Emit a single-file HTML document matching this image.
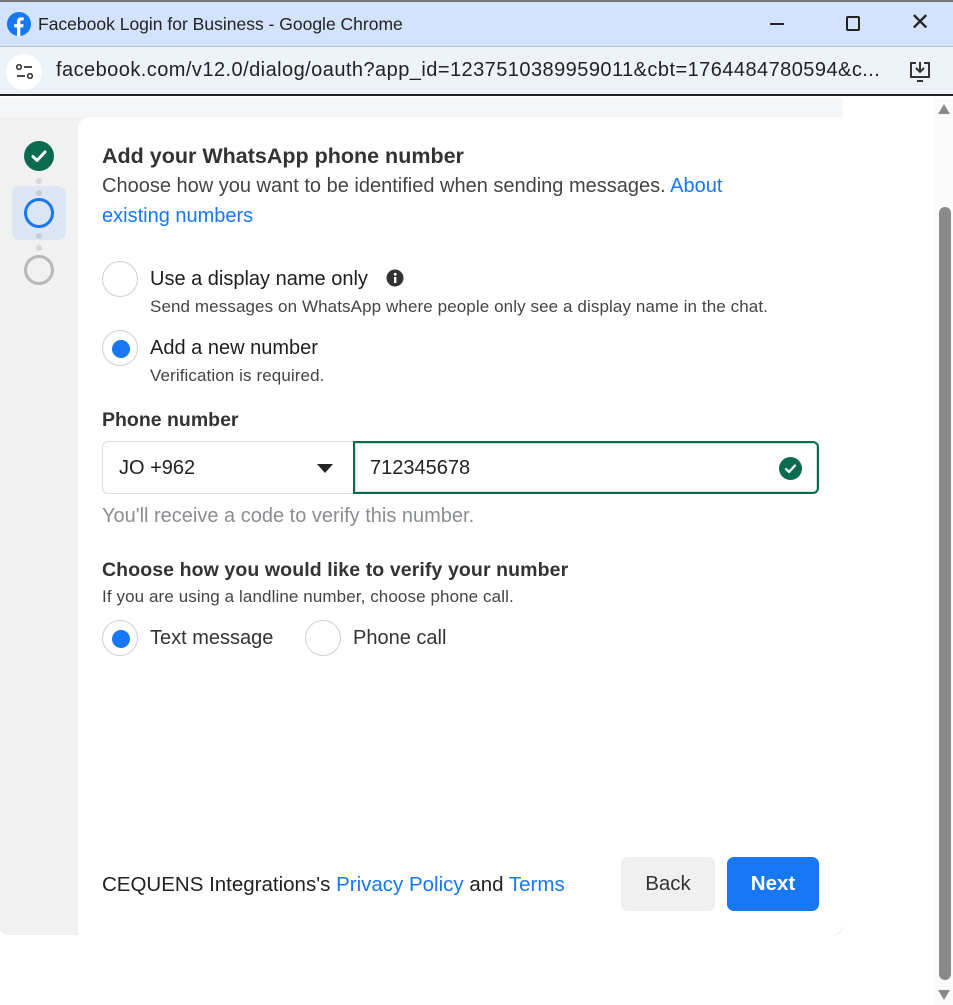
<!DOCTYPE html>
<html><head><meta charset="utf-8"><style>
*{box-sizing:border-box;margin:0;padding:0}
body{width:953px;height:1005px;overflow:hidden;background:#fff;font-family:"Liberation Sans",Arial,sans-serif;position:relative;color:#1c1e21}
.abs{position:absolute;white-space:nowrap}
.title{left:0;top:0;width:953px;height:46px;background:#d3e3fd;border-top:2px solid #777}
.addr{left:0;top:46px;width:953px;height:50px;background:#eef2f9;border-top:1px solid #b8c0cc;border-bottom:2px solid #222}
.radio{position:absolute;width:36px;height:36px;border-radius:50%;border:1px solid #ccd0d5;background:#fff}
.radio.on::after{content:"";position:absolute;left:9px;top:9px;width:18px;height:18px;border-radius:50%;background:#1877f2}
.t17{font-size:20px;color:#1c1e21}
.t14{font-size:17px;color:#444;letter-spacing:0.1px}
.blue{color:#1877f2}
</style></head><body>
<div class="abs title">
 <svg class="abs" style="left:7px;top:10px" width="24" height="24" viewBox="0 0 24 24"><circle cx="12" cy="12" r="12" fill="#1877f2"/><path d="M13.3 24v-8.6h2.9l.4-3.3h-3.3V10c0-1 .3-1.6 1.7-1.6h1.7V5.4c-.3 0-1.3-.1-2.5-.1-2.5 0-4.2 1.5-4.2 4.3v2.5H7.2v3.3H10V24z" fill="#fff"/></svg>
 <div class="abs" style="left:38px;top:12px;font-size:17.5px;color:#222">Facebook Login for Business - Google Chrome</div>
 <div class="abs" style="left:770px;top:21px;width:14px;height:2px;background:#222"></div>
 <div class="abs" style="left:846px;top:14px;width:14px;height:15px;border:2px solid #222;border-radius:2px"></div>
 <div class="abs" style="left:910px;top:6px;font-size:24px;color:#222">✕</div>
</div>
<div class="abs addr">
 <div class="abs" style="left:6px;top:7px;width:36px;height:36px;border-radius:50%;background:#fff"></div>
 <svg class="abs" style="left:15px;top:16px" width="20" height="18" viewBox="0 0 20 18"><circle cx="4" cy="4" r="2.3" fill="none" stroke="#333" stroke-width="1.6"/><path d="M9 4h8M2 13h8" stroke="#333" stroke-width="1.8"/><circle cx="15" cy="13" r="2.3" fill="none" stroke="#333" stroke-width="1.6"/></svg>
 <div class="abs" style="left:56px;top:12px;font-size:20px;letter-spacing:0.45px;color:#222">facebook.com/v12.0/dialog/oauth?app_id=1237510389959011&amp;cbt=1764484780594&amp;c...</div>
 <svg class="abs" style="left:907px;top:12px" width="26" height="26" viewBox="0 0 26 26"><path d="M9 4H4v14h18V4h-5" fill="none" stroke="#333" stroke-width="2"/><path d="M13 3v10M9 9l4 4 4-4M10 22h6" stroke="#333" stroke-width="2" fill="none"/></svg>
</div>
<div class="abs" style="left:0;top:98px;width:843px;height:837px;background:#f1f1f1;border-radius:0 0 8px 8px"></div>
<div class="abs" style="left:0;top:98px;width:843px;height:19px;background:#f5f6f7"></div>
<div class="abs" style="left:78px;top:117px;width:765px;height:818px;background:#fff;border-radius:12px 0 12px 0"></div>
<!-- stepper -->
<div class="abs" style="left:24px;top:141px;width:30px;height:30px;border-radius:50%;background:#0b6b4f"></div>
<svg class="abs" style="left:24px;top:141px" width="30" height="30"><path d="M9 15.5l4 4 8-8.5" stroke="#fff" stroke-width="3" fill="none" stroke-linecap="round" stroke-linejoin="round"/></svg>
<div class="abs" style="left:36px;top:178px;width:6px;height:6px;border-radius:50%;background:#d8d8d8"></div>
<div class="abs" style="left:12px;top:186px;width:54px;height:54px;border-radius:8px;background:#dbe5f3"></div>
<div class="abs" style="left:36px;top:190px;width:6px;height:6px;border-radius:50%;background:#c8ccd4"></div>
<div class="abs" style="left:24px;top:198px;width:30px;height:30px;border-radius:50%;border:3px solid #1877f2"></div>
<div class="abs" style="left:36px;top:233px;width:6px;height:6px;border-radius:50%;background:#c8ccd4"></div>
<div class="abs" style="left:36px;top:245px;width:6px;height:6px;border-radius:50%;background:#d8d8d8"></div>
<div class="abs" style="left:24px;top:255px;width:30px;height:30px;border-radius:50%;border:3px solid #b8b8b8"></div>
<!-- content -->
<div class="abs" style="left:102px;top:144px;font-size:21.5px;font-weight:bold;color:#333">Add your WhatsApp phone number</div>
<div class="abs" style="left:102px;top:171px;font-size:20px;color:#444;line-height:30px">Choose how you want to be identified when sending messages. <span class="blue">About</span><br><span class="blue">existing numbers</span></div>
<div class="radio" style="left:102px;top:261px"></div>
<div class="abs t17" style="left:150px;top:268px">Use a display name only</div>
<svg class="abs" style="left:386px;top:269px" width="18" height="18"><circle cx="9" cy="9" r="8.5" fill="#333"/><rect x="8" y="8" width="2.4" height="6" fill="#fff"/><circle cx="9.2" cy="5.2" r="1.4" fill="#fff"/></svg>
<div class="abs t14" style="left:150px;top:297px">Send messages on WhatsApp where people only see a display name in the chat.</div>
<div class="radio on" style="left:102px;top:330px"></div>
<div class="abs t17" style="left:150px;top:337px">Add a new number</div>
<div class="abs t14" style="left:150px;top:366px">Verification is required.</div>
<div class="abs" style="left:102px;top:409px;font-size:19.5px;font-weight:bold;color:#333">Phone number</div>
<div class="abs" style="left:102px;top:441px;width:252px;height:53px;border:1px solid #dadde1;border-radius:6px 0 0 6px;background:#fff"></div>
<div class="abs t17" style="left:119px;top:457px;color:#222">JO +962</div>
<div class="abs" style="left:317px;top:464px;width:0;height:0;border-left:8px solid transparent;border-right:8px solid transparent;border-top:9px solid #222"></div>
<div class="abs" style="left:353px;top:441px;width:466px;height:53px;border:2px solid #0b6b4f;border-radius:0 6px 6px 0;box-shadow:0 0 0 1px #cfe3dc inset"></div>
<div class="abs t17" style="left:370px;top:457px;color:#222">712345678</div>
<div class="abs" style="left:779px;top:457px;width:23px;height:23px;border-radius:50%;background:#0b6b4f"></div>
<svg class="abs" style="left:779px;top:457px" width="23" height="23"><path d="M7 12l3 3 6-6.5" stroke="#fff" stroke-width="2.2" fill="none" stroke-linecap="round" stroke-linejoin="round"/></svg>
<div class="abs" style="left:102px;top:505px;font-size:20px;color:#8a8d91">You'll receive a code to verify this number.</div>
<div class="abs" style="left:102px;top:559px;font-size:19.5px;font-weight:bold;color:#333;letter-spacing:0.1px">Choose how you would like to verify your number</div>
<div class="abs t14" style="left:102px;top:587px">If you are using a landline number, choose phone call.</div>
<div class="radio on" style="left:102px;top:620px"></div>
<div class="abs t17" style="left:150px;top:627px;color:#333">Text message</div>
<div class="radio" style="left:305px;top:620px"></div>
<div class="abs t17" style="left:353px;top:627px;color:#333">Phone call</div>
<div class="abs" style="left:102px;top:873px;font-size:20.5px;color:#222">CEQUENS Integrations's <span class="blue">Privacy Policy</span> and <span class="blue">Terms</span></div>
<div class="abs" style="left:621px;top:857px;width:94px;height:54px;border-radius:7px;background:#f0f0f0;font-size:20.5px;color:#333;text-align:center;line-height:54px">Back</div>
<div class="abs" style="left:727px;top:857px;width:92px;height:54px;border-radius:7px;background:#1877f2;font-size:20.5px;font-weight:bold;color:#fff;text-align:center;line-height:54px">Next</div>
<!-- scrollbar -->
<div class="abs" style="left:935px;top:98px;width:18px;height:907px;background:#fafafa"></div>
<div class="abs" style="left:938px;top:104px;width:0;height:0;border-left:6px solid transparent;border-right:6px solid transparent;border-bottom:10px solid #8a8a8a"></div>
<div class="abs" style="left:939px;top:207px;width:12px;height:773px;border-radius:6px;background:#8a8a8a"></div>
<div class="abs" style="left:938px;top:990px;width:0;height:0;border-left:6px solid transparent;border-right:6px solid transparent;border-top:10px solid #8a8a8a"></div>
</body></html>
